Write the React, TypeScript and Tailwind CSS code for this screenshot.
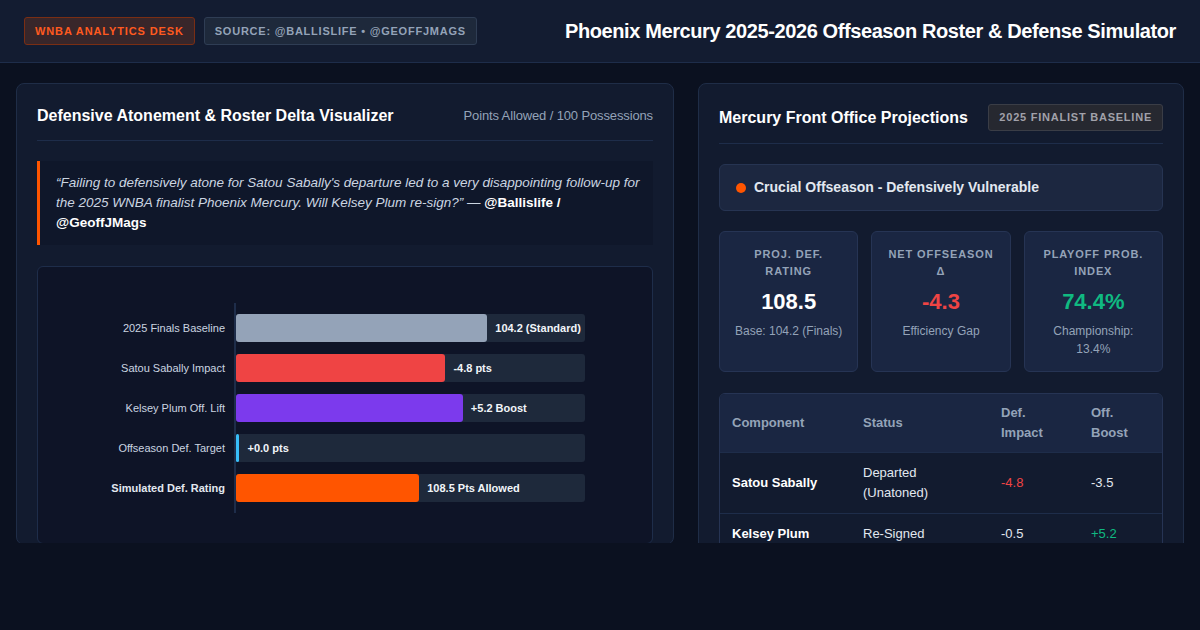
import React from 'react';

// Bars on the defensive delta chart (width = share of the track)
const bars = [
    { label: '2025 Finals Baseline', value: '104.2 (Standard)', pct: 72, color: 'bg-[#94a3b8]', strong: false },
    { label: 'Satou Sabally Impact', value: '-4.8 pts', pct: 60, color: 'bg-[#ef4444]', strong: false },
    { label: 'Kelsey Plum Off. Lift', value: '+5.2 Boost', pct: 65, color: 'bg-[#7c3aed]', strong: false },
    { label: 'Offseason Def. Target', value: '+0.0 pts', pct: 1, color: 'bg-[#38bdf8]', strong: false },
    { label: 'Simulated Def. Rating', value: '108.5 Pts Allowed', pct: 52.5, color: 'bg-[#ff5500]', strong: true },
];

const stats = [
    { label: 'Proj. Def. Rating', value: '108.5', valueColor: 'text-white', sub: 'Base: 104.2 (Finals)' },
    { label: 'Net Offseason Δ', value: '-4.3', valueColor: 'text-[#ef4444]', sub: 'Efficiency Gap' },
    { label: 'Playoff Prob. Index', value: '74.4%', valueColor: 'text-[#10b981]', sub: 'Championship: 13.4%' },
];

const rows = [
    { name: 'Satou Sabally', status: 'Departed (Unatoned)', def: '-4.8', defColor: 'text-[#ef4444]', off: '-3.5', offColor: 'text-[#e2e8f0]' },
    { name: 'Kelsey Plum', status: 'Re-Signed', def: '-0.5', defColor: 'text-[#e2e8f0]', off: '+5.2', offColor: 'text-[#10b981]' },
];

const Header = () => (
    <header className="h-[63px] bg-[#131c31] border-b border-[#1e2d4a] px-6 flex items-center justify-between">
        <div className="flex items-center gap-[9px]">
            <span className="px-[10px] h-[28px] flex items-center rounded-[3px] bg-[#38262a] border border-[#7a2e14] text-[#ff5a1f] text-[11px] font-bold tracking-[0.08em]">
                WNBA ANALYTICS DESK
            </span>
            <span className="px-[10px] h-[28px] flex items-center rounded-[3px] bg-[#1e293b] border border-[#2f3d54] text-[#94a3b8] text-[11px] font-bold tracking-[0.07em]">
                SOURCE: @BALLISLIFE • @GEOFFJMAGS
            </span>
        </div>
        <h1 className="text-[20px] font-bold text-white tracking-[-0.02em]">
            Phoenix Mercury 2025-2026 Offseason Roster &amp; Defense Simulator
        </h1>
    </header>
);

const DeltaChart = () => (
    <div className="mt-[21px] rounded-md border border-[#1e2d4a] bg-[#0e1427] pt-[36px] pb-[30px] flex justify-center">
        <div className="flex w-[480px]">
            <div className="w-[129px] pr-[9px] flex flex-col gap-[12px] py-[11px]">
                {bars.map((b) => (
                    <div
                        key={b.label}
                        className={`h-[28px] flex items-center justify-end text-[11px] whitespace-nowrap ${b.strong ? 'font-bold text-[#e2e8f0]' : 'text-[#cbd5e1]'}`}
                    >
                        {b.label}
                    </div>
                ))}
            </div>
            <div className="w-[2px] bg-[#1e2d4a]" />
            <div className="flex-1 flex flex-col gap-[12px] py-[11px]">
                {bars.map((b) => (
                    <div key={b.label} className="h-[28px] rounded-[3px] bg-[#1e293b] flex items-center">
                        <div className={`h-full rounded-[3px] ${b.color}`} style={{ width: `${b.pct}%` }} />
                        <span className="ml-[8px] text-[11px] font-bold text-[#f1f5f9] whitespace-nowrap">{b.value}</span>
                    </div>
                ))}
            </div>
        </div>
    </div>
);

const LeftPanel = () => (
    <section className="flex-1 rounded-lg border border-[#1f2d47] bg-[#121b2f] px-5 pt-5">
        <div className="flex items-center justify-between pb-3 border-b border-[#1e2d4a] h-[37px]">
            <h2 className="text-[16px] font-bold text-white">Defensive Atonement &amp; Roster Delta Visualizer</h2>
            <span className="text-[13px] text-[#94a3b8] tracking-[-0.01em]">Points Allowed / 100 Possessions</span>
        </div>
        <blockquote className="mt-5 bg-[#0f172a] border-l-[3px] border-[#ff5500] pl-4 pr-[10px] py-[12px] text-[13.5px] leading-[20px] italic text-[#cbd5e1]">
            “Failing to defensively atone for Satou Sabally's departure led to a very disappointing follow-up for the 2025 WNBA finalist Phoenix Mercury. Will Kelsey Plum re-sign?” —{' '}
            <strong className="not-italic font-bold text-white">@Ballislife / @GeoffJMags</strong>
        </blockquote>
        <DeltaChart />
    </section>
);

const RightPanel = () => (
    <section className="w-[486px] rounded-lg border border-[#1f2d47] bg-[#121b2f] px-5 pt-5">
        <div className="flex items-center justify-between pb-3 border-b border-[#1e2d4a] h-[40px]">
            <h2 className="text-[16px] font-bold text-white">Mercury Front Office Projections</h2>
            <span className="h-[27px] px-[10px] flex items-center rounded-[3px] bg-[#262830] border border-[#3a3d46] text-[#a1a1aa] text-[11px] font-bold tracking-[0.07em]">
                2025 FINALIST BASELINE
            </span>
        </div>

        <div className="mt-5 h-[47px] rounded-md bg-[#1c2740] border border-[#263452] px-4 flex items-center gap-2">
            <span className="w-[10px] h-[10px] rounded-full bg-[#ff5500]" />
            <span className="text-[14px] font-bold text-[#e2e8f0]">Crucial Offseason - Defensively Vulnerable</span>
        </div>

        <div className="mt-5 grid grid-cols-3 gap-[13px]">
            {stats.map((s) => (
                <div key={s.label} className="rounded-md bg-[#1a2642] border border-[#263454] px-3 pt-[14px] pb-[13px] text-center">
                    <div className="text-[11px] leading-[17px] font-bold uppercase tracking-[0.08em] text-[#94a3b8]">{s.label}</div>
                    <div className={`mt-[8px] text-[22px] leading-[28px] font-bold ${s.valueColor}`}>{s.value}</div>
                    <div className="mt-[6px] text-[12px] leading-[18px] text-[#94a3b8]">{s.sub}</div>
                </div>
            ))}
        </div>

        <div className="mt-[21px] rounded-md border border-[#263454] overflow-hidden">
            <table className="w-full text-[13px] leading-[20px] border-collapse">
                <thead className="bg-[#1a2642]">
                    <tr className="text-left text-[#94a3b8] font-bold">
                        <th className="w-[131px] px-3 py-[9px] font-bold">Component</th>
                        <th className="w-[138px] px-3 py-[9px] font-bold">Status</th>
                        <th className="w-[90px] px-3 py-[9px] font-bold">Def. Impact</th>
                        <th className="px-3 py-[9px] font-bold">Off. Boost</th>
                    </tr>
                </thead>
                <tbody>
                    {rows.map((r) => (
                        <tr key={r.name} className="border-t border-[#1e2d4a]">
                            <td className="px-3 py-[10px] font-bold text-white">{r.name}</td>
                            <td className="px-3 py-[10px] text-[#e2e8f0]">{r.status}</td>
                            <td className={`px-3 py-[10px] ${r.defColor}`}>{r.def}</td>
                            <td className={`px-3 py-[10px] ${r.offColor}`}>{r.off}</td>
                        </tr>
                    ))}
                </tbody>
            </table>
        </div>
    </section>
);

export default function App() {
    return (
        <div className="w-[1200px] h-[630px] bg-[#0b1120] font-['Liberation_Sans',Arial,sans-serif] overflow-hidden">
            <Header />
            <main className="h-[480px] overflow-hidden flex items-start gap-6 px-4 pt-5">
                <LeftPanel />
                <RightPanel />
            </main>
        </div>
    );
}
